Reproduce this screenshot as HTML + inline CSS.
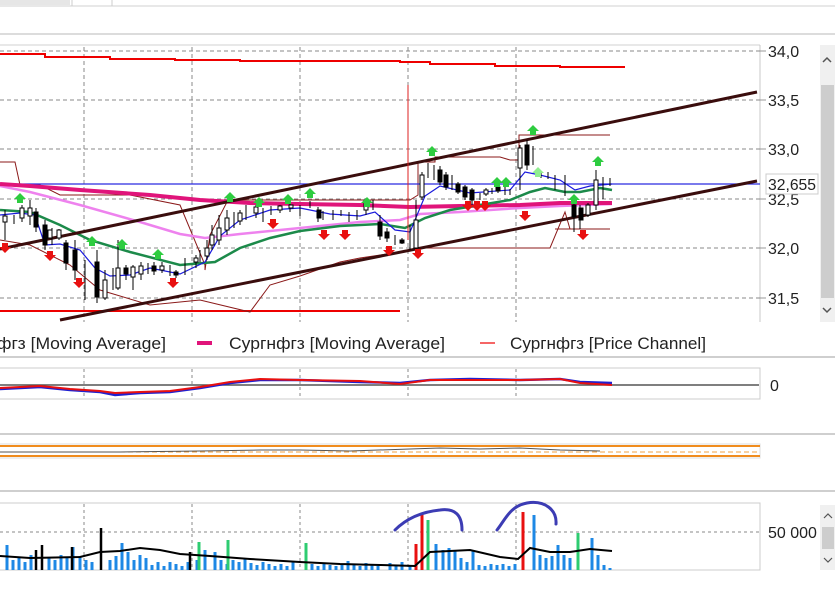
<!DOCTYPE html>
<html><head><meta charset="utf-8"><style>
body{margin:0;width:835px;height:602px;background:#fff;overflow:hidden;font-family:"Liberation Sans",sans-serif}
svg{display:block}
text{font-family:"Liberation Sans",sans-serif}
</style></head><body>
<svg width="835" height="602" viewBox="0 0 835 602">
<rect x="0" y="0" width="70" height="5" fill="#e6e6e6"/>
<line x1="0" y1="6" x2="835" y2="6" stroke="#d0d0d0"/>
<line x1="72" y1="0" x2="72" y2="6" stroke="#ccc"/>
<line x1="112" y1="0" x2="112" y2="6" stroke="#ccc"/>
<line x1="0" y1="34" x2="835" y2="34" stroke="#dcdcdc" stroke-width="2"/>
<line x1="0" y1="45" x2="760" y2="45" stroke="#d0d0d0"/>
<line x1="760" y1="45" x2="760" y2="322" stroke="#c8c8c8"/>
<g stroke="#888" stroke-dasharray="4,3" stroke-width="1">
<line x1="0" y1="51" x2="760" y2="51"/><line x1="0" y1="100" x2="760" y2="100"/><line x1="0" y1="149" x2="760" y2="149"/><line x1="0" y1="199" x2="760" y2="199"/><line x1="0" y1="248" x2="760" y2="248"/><line x1="0" y1="298" x2="760" y2="298"/>
<line x1="84" y1="47" x2="84" y2="322"/><line x1="192" y1="47" x2="192" y2="322"/><line x1="300" y1="47" x2="300" y2="322"/><line x1="408" y1="47" x2="408" y2="322"/><line x1="516" y1="47" x2="516" y2="322"/>
</g>
<g stroke="#999"><line x1="760" y1="51" x2="766" y2="51"/><line x1="760" y1="100" x2="766" y2="100"/><line x1="760" y1="149" x2="766" y2="149"/><line x1="760" y1="199" x2="766" y2="199"/><line x1="760" y1="248" x2="766" y2="248"/><line x1="760" y1="298" x2="766" y2="298"/></g>
<g font-size="16" fill="#222">
<text x="768" y="57">34,0</text><text x="768" y="106">33,5</text><text x="768" y="155">33,0</text><text x="768" y="205">32,5</text><text x="768" y="254">32,0</text><text x="768" y="304">31,5</text>
</g>
<rect x="820" y="45" width="15" height="277" fill="#f0f0f0"/>
<rect x="821" y="85" width="13" height="213" fill="#cdcdcd"/>
<path d="M823 62 L827 58 L831 62" fill="none" stroke="#555" stroke-width="1.5"/>
<path d="M823 308 L827 312 L831 308" fill="none" stroke="#555" stroke-width="1.5"/>
<path d="M0 54 H45 V57 H110 V59 H175 V60 H240 V61 H300 V61 H400 V62 H430 V64 H495 V66 H560 V67 H625" fill="none" stroke="#e00" stroke-width="2"/>
<line x1="0" y1="311" x2="400" y2="311" stroke="#e00" stroke-width="2"/>
<path d="M0 162 H15 L20 185 H40 L60 195 H130 L180 205 L205 265 V270 L210 235 L228 200 H300 H410 L418 195 V162 H435 V157 H500 L510 160 H519 V135 H610" fill="none" stroke="#8b1a1a" stroke-width="1"/>
<path d="M0 240 L30 245 L70 265 L100 290 L150 305 L200 300 L250 312 L270 285 L300 276 L340 262 L360 258 L400 252 L420 248 H550 L565 212 L570 229 H610" fill="none" stroke="#8b1a1a" stroke-width="1"/>
<path d="M555 184 H610 M555 229 H610" stroke="#8b1a1a" stroke-width="1"/>
<line x1="0" y1="184" x2="760" y2="184" stroke="#2a2ae0" stroke-width="1.2"/>
<path d="M0 186 L30 192 L80 205 L140 222 L180 234 L205 238 L240 234 L300 228 L360 222 L400 220 L420 214 L460 212 L520 208 L560 206 L612 204" fill="none" stroke="#ee82ee" stroke-width="2.5"/>
<path d="M0 184 L30 186 L80 190 L150 195 L200 200 L250 203 L300 204 L360 205 L410 207 L460 206 L520 205 L560 203 L612 203" fill="none" stroke="#e0147a" stroke-width="4"/>
<path d="M0 210 L30 212 L60 225 L90 240 L130 252 L180 265 L215 262 L240 248 L270 238 L300 231 L340 226 L380 224 L405 228 L425 218 L450 210 L480 205 L510 200 L530 192 L545 188 L565 192 L580 192 L600 188 L612 190" fill="none" stroke="#1c8a4a" stroke-width="2.5"/>
<path d="M0 215 L20 213 L35 215 L45 245 L60 244 L80 250 L95 268 L110 276 L130 275 L150 268 L180 274 L205 262 L220 236 L240 220 L270 210 L300 208 L330 214 L360 216 L375 212 L395 230 L410 232 L425 196 L440 186 L470 193 L510 190 L525 172 L540 175 L560 180 L575 190 L590 186 L612 184" fill="none" stroke="#1a1adc" stroke-width="1.2"/>
<line x1="0" y1="249" x2="757" y2="92" stroke="#3a0d0d" stroke-width="3"/>
<line x1="60" y1="320" x2="757" y2="181" stroke="#3a0d0d" stroke-width="3"/>
<line x1="408" y1="85" x2="408" y2="240" stroke="#d22" stroke-width="1"/>
<g stroke="#000" stroke-width="1">
<path d="M5 210V240 M14 215V224 M22 205V222 M30 200V225 M36 208V232 M45 220V250 M52 228V245 M59 229V240 M66 240V270 M75 240V280 M85 260V300 M97 250V303 M105 270V300 M113 268V290 M118 240V290 M126 265V280 M133 265V290 M141 262V280 M148 263V274 M154 262V275 M162 262V273 M170 265V276 M176 270V278 M185 258V275 M196 255V268 M200 250V262 M207 240V260 M212 225V250 M219 215V245 M227 210V235 M234 212V228 M240 210V225 M246 205V220 M256 205V218 M263 208V222 M271 206V215 M280 205V213 M290 203V212 M300 205V216 M310 201V208 M318 207V222 M323 211V220 M333 210V220 M341 210V216 M349 212V222 M357 210V220 M366 198V215 M373 200V210 M380 215V240 M387 228V242 M395 235V245 M402 238V244 M410 225V250 M416 200V250 M422 172V200 M428 163V178 M434 165V180 M440 166V185 M446 172V190 M452 175V190 M458 182V194 M465 185V200 M472 188V205 M480 193V200 M486 188V196 M492 188V194 M498 185V193 M505 186V195 M510 189V195 M520 145V190 M527 140V170 M533 146V165 M541 171V178 M548 172V179 M555 175V190 M565 175V196 M574 203V232 M580 205V229 M588 203V217 M596 170V210 M603 177V199 M610 178V186"/>
</g>
<g stroke="#000" stroke-width="1" fill="#000">
<rect x="34" y="212" width="4" height="15"/><rect x="43" y="225" width="4" height="20"/><rect x="64" y="243" width="4" height="20"/><rect x="73" y="250" width="4" height="20"/><rect x="95" y="262" width="4" height="35"/><rect x="124" y="268" width="4" height="6"/><rect x="152" y="266" width="4" height="5"/><rect x="174" y="272" width="4" height="3"/><rect x="317" y="210" width="4" height="8"/><rect x="378" y="222" width="4" height="14"/><rect x="385" y="232" width="4" height="6"/><rect x="400" y="240" width="4" height="3"/><rect x="438" y="170" width="4" height="12"/><rect x="444" y="175" width="4" height="12"/><rect x="456" y="184" width="4" height="8"/><rect x="463" y="187" width="4" height="10"/><rect x="470" y="190" width="4" height="10"/><rect x="496" y="187" width="4" height="4"/><rect x="525" y="145" width="4" height="20"/><rect x="572" y="205" width="4" height="12"/><rect x="579" y="208" width="4" height="12"/></g>
<g stroke="#000" stroke-width="1" fill="#fff">
<rect x="3" y="216" width="4" height="6"/><rect x="20" y="208" width="4" height="10"/><rect x="28" y="208" width="4" height="8"/><rect x="48" y="230" width="4" height="8"/><rect x="57" y="230" width="4" height="8"/><rect x="103" y="280" width="4" height="18"/><rect x="116" y="268" width="4" height="20"/><rect x="131" y="267" width="4" height="10"/><rect x="139" y="266" width="4" height="8"/><rect x="160" y="266" width="4" height="4"/><rect x="194" y="258" width="4" height="4"/><rect x="205" y="248" width="4" height="8"/><rect x="210" y="235" width="4" height="10"/><rect x="217" y="228" width="4" height="12"/><rect x="225" y="218" width="4" height="12"/><rect x="238" y="213" width="4" height="8"/><rect x="254" y="207" width="4" height="6"/><rect x="278" y="206" width="4" height="4"/><rect x="289" y="205" width="4" height="3"/><rect x="364" y="200" width="4" height="10"/><rect x="414" y="220" width="4" height="28"/><rect x="420" y="175" width="4" height="22"/><rect x="484" y="190" width="4" height="4"/><rect x="518" y="148" width="4" height="20"/><rect x="586" y="205" width="4" height="10"/><rect x="594" y="180" width="4" height="25"/></g>
<g fill="#2ecc40">
<path d="M-6 0 L0 -6 L6 0 H3 V4 H-3 V0Z" transform="translate(20,199)"/>
<path d="M-6 0 L0 -6 L6 0 H3 V4 H-3 V0Z" transform="translate(92,242)"/><path d="M-6 0 L0 -6 L6 0 H3 V4 H-3 V0Z" transform="translate(122,245)"/><path d="M-6 0 L0 -6 L6 0 H3 V4 H-3 V0Z" transform="translate(158,255)"/><path d="M-6 0 L0 -6 L6 0 H3 V4 H-3 V0Z" transform="translate(230,198)"/><path d="M-6 0 L0 -6 L6 0 H3 V4 H-3 V0Z" transform="translate(259,203)"/><path d="M-6 0 L0 -6 L6 0 H3 V4 H-3 V0Z" transform="translate(288,200)"/><path d="M-6 0 L0 -6 L6 0 H3 V4 H-3 V0Z" transform="translate(310,194)"/><path d="M-6 0 L0 -6 L6 0 H3 V4 H-3 V0Z" transform="translate(367,203)"/><path d="M-6 0 L0 -6 L6 0 H3 V4 H-3 V0Z" transform="translate(432,152)"/><path d="M-6 0 L0 -6 L6 0 H3 V4 H-3 V0Z" transform="translate(497,183)"/><path d="M-6 0 L0 -6 L6 0 H3 V4 H-3 V0Z" transform="translate(506,183)"/><path d="M-6 0 L0 -6 L6 0 H3 V4 H-3 V0Z" transform="translate(533,131)"/><path d="M-6 0 L0 -6 L6 0 H3 V4 H-3 V0Z" transform="translate(598,162)"/><path d="M-6 0 L0 -6 L6 0 H3 V4 H-3 V0Z" transform="translate(574,200)"/></g>
<path d="M-6 0 L0 -6 L6 0 H3 V4 H-3 V0Z" transform="translate(538,173)" fill="#90ee90"/>
<g fill="#e81010">
<path d="M-6 0 L0 6 L6 0 H3 V-4 H-3 V0Z" transform="translate(5,247)"/><path d="M-6 0 L0 6 L6 0 H3 V-4 H-3 V0Z" transform="translate(50,255)"/><path d="M-6 0 L0 6 L6 0 H3 V-4 H-3 V0Z" transform="translate(79,282)"/><path d="M-6 0 L0 6 L6 0 H3 V-4 H-3 V0Z" transform="translate(173,282)"/><path d="M-6 0 L0 6 L6 0 H3 V-4 H-3 V0Z" transform="translate(273,223)"/><path d="M-6 0 L0 6 L6 0 H3 V-4 H-3 V0Z" transform="translate(324,234)"/><path d="M-6 0 L0 6 L6 0 H3 V-4 H-3 V0Z" transform="translate(345,234)"/><path d="M-6 0 L0 6 L6 0 H3 V-4 H-3 V0Z" transform="translate(389,250)"/><path d="M-6 0 L0 6 L6 0 H3 V-4 H-3 V0Z" transform="translate(418,253)"/><path d="M-6 0 L0 6 L6 0 H3 V-4 H-3 V0Z" transform="translate(468,205)"/><path d="M-6 0 L0 6 L6 0 H3 V-4 H-3 V0Z" transform="translate(477,205)"/><path d="M-6 0 L0 6 L6 0 H3 V-4 H-3 V0Z" transform="translate(485,205)"/><path d="M-6 0 L0 6 L6 0 H3 V-4 H-3 V0Z" transform="translate(525,215)"/><path d="M-6 0 L0 6 L6 0 H3 V-4 H-3 V0Z" transform="translate(583,234)"/></g>
<rect x="766" y="174" width="52" height="20" fill="#fff" stroke="#ccc"/>
<text x="768" y="190" font-size="16" fill="#222" textLength="48" lengthAdjust="spacingAndGlyphs">32,655</text>
<text x="-3" y="349" font-size="17" fill="#222" textLength="169" lengthAdjust="spacingAndGlyphs">фгз [Moving Average]</text>
<line x1="197" y1="343" x2="212" y2="343" stroke="#e0147a" stroke-width="4"/>
<text x="229" y="349" font-size="17" fill="#222" textLength="216" lengthAdjust="spacingAndGlyphs">Сургнфгз [Moving Average]</text>
<line x1="480" y1="343" x2="495" y2="343" stroke="#e00" stroke-width="1.2"/>
<text x="510" y="349" font-size="17" fill="#222" textLength="196" lengthAdjust="spacingAndGlyphs">Сургнфгз [Price Channel]</text>
<line x1="0" y1="357" x2="835" y2="357" stroke="#cfcfcf" stroke-width="2"/>
<rect x="-1" y="368" width="761" height="31" fill="#fff" stroke="#ccc"/>
<g stroke="#888" stroke-dasharray="3,3"><line x1="84" y1="369" x2="84" y2="399"/><line x1="192" y1="369" x2="192" y2="399"/><line x1="300" y1="369" x2="300" y2="399"/><line x1="408" y1="369" x2="408" y2="399"/><line x1="516" y1="369" x2="516" y2="399"/></g>
<line x1="0" y1="385" x2="759" y2="385" stroke="#555" stroke-width="1.5"/>
<path d="M0 389 L40 387 L70 390 L100 392 L115 395 L140 393 L170 392 L200 388 L230 383 L260 380 L300 380 L360 382 L400 383 L430 380 L470 379 L520 380 L560 379 L580 382 L612 383" fill="none" stroke="#2020d0" stroke-width="2.5"/>
<path d="M0 388 L40 386 L70 389 L100 391 L115 393 L140 392 L170 391 L200 387 L230 382 L260 379 L300 380 L360 381 L400 384 L430 380 L470 380 L520 380 L560 379 L580 383 L612 385" fill="none" stroke="#e81010" stroke-width="2"/>
<text x="770" y="391" font-size="16" fill="#222">0</text>
<line x1="0" y1="434" x2="835" y2="434" stroke="#cfcfcf" stroke-width="2"/>
<rect x="-1" y="444" width="761" height="14" fill="#fff" stroke="#ddd"/>
<line x1="0" y1="446" x2="760" y2="446" stroke="#f08c1e" stroke-width="2"/>
<line x1="0" y1="456" x2="760" y2="456" stroke="#f08c1e" stroke-width="2"/>
<line x1="0" y1="452" x2="760" y2="452" stroke="#f0a040" stroke-dasharray="5,3"/>
<path d="M0 452 L120 452 L200 451 L260 450 L300 450 L350 451 L410 449 L440 448 L480 449 L520 448 L560 450 L600 451" fill="none" stroke="#555" stroke-width="1"/>
<line x1="0" y1="491" x2="835" y2="491" stroke="#cfcfcf" stroke-width="2"/>
<rect x="-1" y="503" width="761" height="67" fill="#fff" stroke="#ccc"/>
<g stroke="#888" stroke-dasharray="3,3"><line x1="84" y1="504" x2="84" y2="570"/><line x1="192" y1="504" x2="192" y2="570"/><line x1="300" y1="504" x2="300" y2="570"/><line x1="408" y1="504" x2="408" y2="570"/><line x1="516" y1="504" x2="516" y2="570"/><line x1="0" y1="532" x2="760" y2="532"/></g>
<path d="M7 570V545 M13 570V560 M19 570V558 M25 570V562 M31 570V555 M49 570V558 M55 570V560 M61 570V555 M67 570V557 M73 570V547 M80 570V556 M86 570V560 M92 570V562 M110 570V560 M116 570V556 M122 570V543 M128 570V552 M134 570V560 M140 570V555 M146 570V558 M152 570V565 M158 570V562 M164 570V566 M170 570V562 M176 570V564 M182 570V566 M188 570V562 M197 570V560 M205 570V550 M215 570V552 M221 570V560 M227 570V564 M233 570V560 M239 570V562 M245 570V558 M251 570V563 M257 570V565 M263 570V562 M269 570V564 M275 570V566 M281 570V564 M287 570V566 M293 570V562 M312 570V564 M318 570V566 M324 570V563 M330 570V565 M336 570V566 M342 570V564 M348 570V561 M354 570V565 M360 570V566 M366 570V563 M372 570V565 M378 570V566 M390 570V563 M396 570V566 M402 570V562 M410 570V565 M436 570V544 M443 570V550 M449 570V548 M455 570V550 M461 570V558 M467 570V562 M473 570V550 M479 570V565 M485 570V566 M491 570V564 M497 570V565 M503 570V564 M509 570V566 M515 570V564 M534 570V515 M540 570V555 M546 570V558 M552 570V556 M558 570V545 M564 570V555 M570 570V558 M592 570V538 M598 570V555 M604 570V565 M610 570V568" stroke="#1e88e5" stroke-width="3"/>
<path d="M36 570V550 M42 570V545 M72 570V547 M101 570V528 M190 570V552" stroke="#000" stroke-width="2.5"/>
<path d="M199 570V542 M228 570V540 M306 570V543 M428 570V520 M578 570V533" stroke="#2ecc71" stroke-width="3"/>
<path d="M416 570V544 M422 570V513 M523 570V512" stroke="#e81010" stroke-width="3"/>
<path d="M0 556 L30 558 L80 557 L100 552 L120 551 L140 548 L160 550 L180 554 L210 556 L250 559 L300 562 L340 564 L380 565 L415 566 L430 552 L470 550 L500 557 L518 559 L530 548 L550 552 L570 552 L590 549 L612 551" fill="none" stroke="#000" stroke-width="2"/>
<path d="M395 530 C405 520 420 512 440 510 C455 508 462 515 462 530 M497 530 C505 520 510 506 527 503 C545 500 557 510 556 524" fill="none" stroke="#3c3cb4" stroke-width="3" stroke-linecap="round"/>
<text x="768" y="538" font-size="16" fill="#222">50 000</text>
<rect x="820" y="505" width="15" height="65" fill="#f0f0f0"/>
<rect x="822" y="527" width="12" height="22" fill="#cdcdcd"/>
<path d="M824 518 L828 514 L832 518 M824 558 L828 562 L832 558" fill="none" stroke="#555" stroke-width="1.2"/>
</svg>
</body></html>
